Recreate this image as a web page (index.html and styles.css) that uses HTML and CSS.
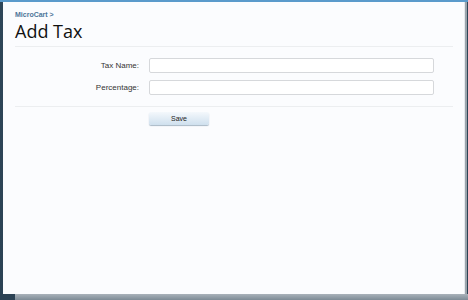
FILE: index.html
```html
<!DOCTYPE html>
<html>
<head>
<meta charset="utf-8">
<link rel="stylesheet" href="styles.css">
</head>
<body>
<div class="frame">
  <div class="panel">
    <div class="crumb">MicroCart &gt;</div>
    <h1 class="title">Add Tax</h1>
    <div class="form">
      <div class="row">
        <label class="lbl">Tax Name:</label>
        <div class="input"></div>
      </div>
      <div class="row">
        <label class="lbl">Percentage:</label>
        <div class="input"></div>
      </div>
    </div>
    <div class="actions">
      <div class="btn">Save</div>
    </div>
  </div>
  <div class="shadow"></div>
</div>
</body>
</html>
```
FILE: styles.css
```css
html, body {
  margin: 0;
  padding: 0;
}
body {
  width: 468px;
  height: 300px;
  overflow: hidden;
  background: #2e4658;
  font-family: "Liberation Sans", Arial, sans-serif;
}
.frame {
  height: 300px;
  box-sizing: border-box;
  border-top: 2px solid #5a9acb;
  padding-left: 3px;
  background: linear-gradient(to bottom, #2e4658, #2b4254);
}
.panel {
  width: 462px;
  height: 292px;
  box-sizing: border-box;
  background: #fbfcfe;
  border-right: 1px solid #e6e9ee;
  padding: 8px 12px 0 12px;
  box-shadow: 2px 0 0 #9aa4ac;
}
.shadow {
  height: 6px;
  margin-left: 12px;
  background: linear-gradient(to bottom, #a9b2ba, #7d8b96);
}
.crumb {
  font-size: 7px;
  font-weight: bold;
  color: #4d7599;
  line-height: 9px;
}
.title {
  margin: 0;
  font-family: "Open Sans", "DejaVu Sans", sans-serif;
  font-weight: normal;
  font-size: 18px;
  line-height: 24px;
  color: #111;
  padding-bottom: 3px;
  border-bottom: 1px solid #eceef0;
  width: 438px;
}
.form {
  padding: 11px 0 11px 0;
  display: flex;
  flex-direction: column;
  gap: 7px;
  border-bottom: 1px solid #eceef0;
  width: 438px;
}
.row {
  display: flex;
  align-items: center;
}
.lbl {
  width: 124px;
  text-align: right;
  font-size: 8px;
  color: #333;
  padding-right: 10px;
}
.input {
  width: 285px;
  height: 15px;
  box-sizing: border-box;
  border: 1px solid #d6d8db;
  border-radius: 2px;
  background: #fff;
}
.actions {
  padding: 5px 0 0 134px;
}
.btn {
  width: 60px;
  height: 13px;
  box-sizing: border-box;
  border-radius: 2px;
  background: linear-gradient(to bottom, #f4f8fc, #cfe0ee);
  box-shadow: 0 1px 1px #a8b8c6;
  font-size: 7px;
  text-align: center;
  line-height: 13px;
  color: #222;
}
```
